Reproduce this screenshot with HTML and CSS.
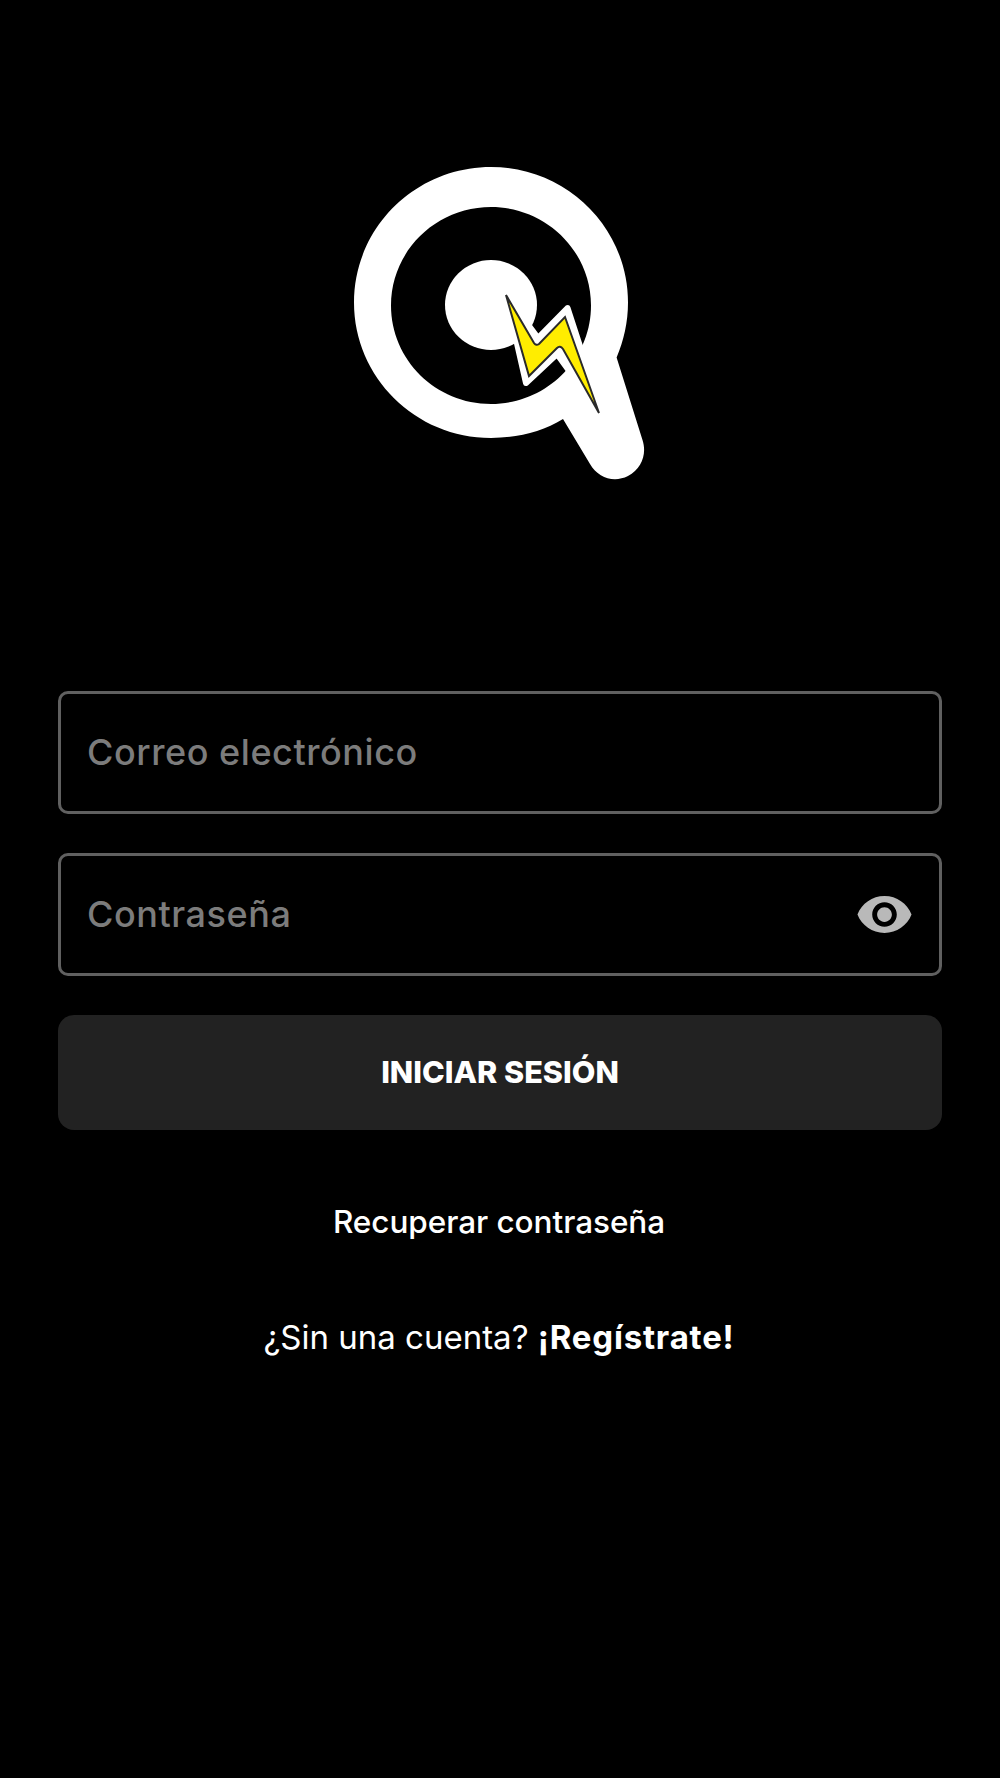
FILE: index.html
```html
<!DOCTYPE html>
<html lang="es">
<head>
<meta charset="utf-8">
<title>Iniciar sesión</title>
<link rel="stylesheet" href="styles.css">
</head>
<body>
<main class="screen">
  <div class="logo-wrap">
    <svg class="logo" viewBox="340 150 320 340" aria-hidden="true">
      <path class="q-body" fill-rule="evenodd" d="M491 167C566.600 167 628 227.700 628 302.500C628 322 623.800 340.600 616.600 357.500L642.500 440C647 454 642 468 628 476C614 483 598 478 590 464L563 419C542.500 431.500 517.700 438 491 438C415.400 438 354 377.300 354 302.500C354 227.700 415.400 167 491 167ZM491 207C435.800 207 391 251.100 391 305.500C391 359.900 435.800 404 491 404C546.200 404 591 359.900 591 305.500C591 251.100 546.200 207 491 207Z"/>
      <ellipse class="q-body" cx="491" cy="305" rx="46" ry="45"/>
      <path class="bolt-halo" d="M506 295L526 383L557 354L570 372L604 420L567.500 308L538 338Z"/>
      <path class="bolt" d="M506 295L534 343Q536 346 539 344L565 317L599 413L563 349Q560 345 557 348L529 376Z"/>
    </svg>
  </div>
  <form class="form">
    <div class="field"><span class="placeholder">Correo electrónico</span></div>
    <div class="field"><span class="placeholder">Contraseña</span>
      <svg class="eye" viewBox="0 0 24 24" aria-hidden="true"><path d="M12 4.500C7 4.500 2.730 7.610 1 12c1.730 4.390 6 7.500 11 7.500s9.270-3.110 11-7.500c-1.730-4.390-6-7.500-11-7.500zM12 17c-2.760 0-5-2.240-5-5s2.240-5 5-5 5 2.240 5 5-2.240 5-5 5zm0-8c-1.660 0-3 1.340-3 3s1.340 3 3 3 3-1.340 3-3-1.340-3-3-3z"/></svg>
    </div>
    <button class="submit" type="button">INICIAR SESIÓN</button>
  </form>
  <p class="recover">Recuperar contraseña</p>
  <p class="signup">¿Sin una cuenta? <strong>¡Regístrate!</strong></p>
</main>
</body>
</html>
```
FILE: styles.css
```css
html, body {
  margin: 0;
  padding: 0;
  background: #000;
}
.screen {
  box-sizing: border-box;
  width: 1000px;
  height: 1778px;
  overflow: hidden;
  background: #000;
  color: #fff;
  font-family: Inter, "Liberation Sans", sans-serif;
  padding-top: 150px;
}
.logo-wrap {
  display: flex;
  justify-content: center;
  height: 340px;
}
.logo {
  display: block;
  width: 320px;
  height: 340px;
}
.q-body { fill: #fff; }
.bolt-halo {
  fill: #fff;
  stroke: #fff;
  stroke-width: 6;
  stroke-linejoin: round;
}
.bolt {
  fill: #ffed00;
  stroke: #2a2a2a;
  stroke-width: 2;
  stroke-linejoin: miter;
}
.form {
  display: flex;
  flex-direction: column;
  gap: 39px;
  margin: 201px 58px 0;
}
.field {
  box-sizing: border-box;
  display: flex;
  align-items: center;
  justify-content: space-between;
  height: 123px;
  padding: 0 26px 2px;
  border: 3px solid #606060;
  border-radius: 10px;
}
.placeholder {
  font-size: 36px;
  font-weight: 500;
  letter-spacing: 0.55px;
  color: #7c7c7c;
}
.eye {
  display: block;
  width: 59px;
  height: 59px;
  margin: 2px -1px 0 0;
  fill: #b9b9b9;
}
.submit {
  height: 115px;
  padding: 0 0 2px;
  border: 0;
  border-radius: 16px;
  background: #222;
  color: #fff;
  font-family: inherit;
  font-size: 30.600px;
  font-weight: 800;
}
.recover {
  margin: 70px 0 0;
  padding-right: 2px;
  text-align: center;
  font-size: 31.500px;
  line-height: 44px;
  font-weight: 500;
  letter-spacing: -0.05px;
}
.signup {
  margin: 71px 0 0;
  padding-right: 2px;
  text-align: center;
  font-size: 33px;
  line-height: 44px;
}
.signup strong {
  font-weight: 700;
  letter-spacing: 0.8px;
}
```
